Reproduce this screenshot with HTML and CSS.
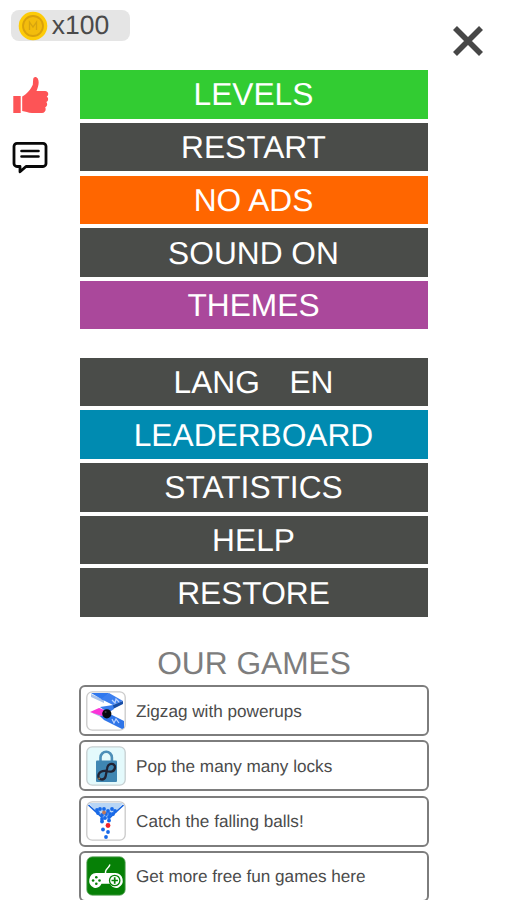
FILE: index.html
```html
<!DOCTYPE html>
<html lang="en">
<head>
<meta charset="utf-8">
<title>Menu</title>
<link rel="stylesheet" href="styles.css">
</head>
<body>
<div class="screen">
  <aside class="side">
    <div class="coins">
      <svg class="coin" viewBox="0 0 30 30" aria-hidden="true"><circle cx="15" cy="15" r="14.3" fill="#fdcb08"/><circle cx="15" cy="15" r="10" fill="#f3bc0c" stroke="#d9a10c" stroke-width="1.8"/><path d="M11.5 19v-8l3.5 5 3.5-5v8" fill="none" stroke="#d7a40f" stroke-width="1.3"/></svg>
      <span>x100</span>
    </div>
    <svg class="like" viewBox="0 0 36 38" aria-hidden="true"><path d="M.3 20h7.4v17H.3zM9.2 20.5C14 18 18 13 19.8 8.800L20.200 3C20.500.4 23.500.2 24.800 2.500C26.500 6 25.500 10.500 23.500 15H32C35.500 15 36.300 19 33.700 20.600C35.800 22 35.500 25 33.300 26C34.800 27.800 34.300 30.400 32.200 31.300C33.500 34 32 37 29 37H19C15 37 12.500 35.300 9.200 35z" fill="#fd5456"/></svg>
    <svg class="chat" viewBox="0 0 36 34" aria-hidden="true"><path d="M5 2.300h26a3 3 0 0 1 3 3v17.200a3 3 0 0 1-3 3H14L8 30.800V25.500H5a3 3 0 0 1-3-3V5.300a3 3 0 0 1 3-3z" fill="#fff" stroke="#080808" stroke-width="2.800" stroke-linejoin="round"/><path d="M9.500 10h17M9.500 15.500h17" stroke="#080808" stroke-width="2.600" stroke-linecap="round"/></svg>
  </aside>
  <main class="menu">
    <nav class="group">
      <button class="item green">LEVELS</button>
      <button class="item">RESTART</button>
      <button class="item orange">NO ADS</button>
      <button class="item">SOUND ON</button>
      <button class="item purple">THEMES</button>
    </nav>
    <nav class="group">
      <button class="item lang"><span>LANG</span><span>EN</span></button>
      <button class="item blue">LEADERBOARD</button>
      <button class="item">STATISTICS</button>
      <button class="item">HELP</button>
      <button class="item">RESTORE</button>
    </nav>
    <h2 class="heading">OUR GAMES</h2>
    <div class="games">
      <a class="game">
        <svg class="thumb" viewBox="0 0 40 40" aria-hidden="true"><clipPath id="c1"><rect x="1" y="1" width="38" height="38" rx="5"/></clipPath><rect x=".8" y=".8" width="38.400" height="38.400" rx="5.500" fill="#fff" stroke="#c9c9c9" stroke-width="1.300"/><g clip-path="url(#c1)"><path d="M5 3l13 6v3L5 6zM13 17l10 4v3l-10-3zM4 21l13 6 20 11v-3L17 24z" fill="#a9c3ea"/><path d="M5 2h18l-6 7z" fill="#2f78ef"/><path d="M23 2l14 8-10 4-12-6z" fill="#3d80f0"/><path d="M37 10v3l-10 5v-4z" fill="#174da6"/><path d="M27 14l-13 2 8 6 6-4z" fill="#387cec"/><path d="M14 25l10-2 14 7v7l-2 1-18-9z" fill="#2f75e8"/><path d="M4 21l9-4 10 4-7 4z" fill="#fb35d8"/><path d="M26 9l3 3 1-4 3 3M26 28l2 4 2-4 3 4" stroke="#b9d2ff" stroke-width="1.200" fill="none"/></g><circle cx="20.800" cy="22.800" r="4.600" fill="#080a10"/><circle cx="19.600" cy="21" r="1" fill="#444"/></svg>
        <span>Zigzag with powerups</span>
      </a>
      <a class="game">
        <svg class="thumb" viewBox="0 0 40 40" aria-hidden="true"><rect x=".8" y=".8" width="38.400" height="38.400" rx="5.500" fill="#e4fafc" stroke="#c6cfd1" stroke-width="1.300"/><path d="M14.500 16v-4.500a5.700 5.700 0 0 1 11.400 0V16" fill="none" stroke="#4c8fb8" stroke-width="2.600"/><rect x="10" y="14.500" width="21" height="21.500" rx="1" fill="#3f86b2"/><path d="M20.400 25C16.500 24.300 12.400 26 12.300 30S18 35 19.600 30.500L21 23C22 16 29.500 17 29 21.500S24.500 26 20.400 25z" fill="none" stroke="#202334" stroke-width="2.300"/><circle cx="13.200" cy="32.500" r="1" fill="#9b7846"/></svg>
        <span>Pop the many many locks</span>
      </a>
      <a class="game">
        <svg class="thumb" viewBox="0 0 40 40" aria-hidden="true"><rect x=".8" y=".8" width="38.400" height="38.400" rx="5.500" fill="#fff" stroke="#c9c9c9" stroke-width="1.300"/><path d="M3 2h34L24 18h-8z" fill="#b7d5f6"/><path d="M2.500 4L16 16.500M37.500 4L24 16.500" stroke="#1763dc" stroke-width="1.700"/><g fill="#1769e8"><circle cx="11" cy="9" r="1.900"/><circle cx="14" cy="8" r="1.900"/><circle cx="18" cy="8" r="1.900"/><circle cx="22" cy="10" r="1.900"/><circle cx="26" cy="8" r="1.900"/><circle cx="29" cy="10" r="1.900"/><circle cx="12" cy="12" r="1.900"/><circle cx="16" cy="14" r="1.900"/><circle cx="20" cy="13" r="1.900"/><circle cx="24" cy="13" r="1.900"/><circle cx="27" cy="13" r="1.900"/><circle cx="16" cy="18" r="1.900"/><circle cx="19" cy="17" r="1.900"/><circle cx="23" cy="16" r="1.900"/><circle cx="16" cy="20.500" r="1.900"/><circle cx="23" cy="19.500" r="1.900"/><circle cx="17" cy="28.500" r="1.900"/><circle cx="22" cy="31" r="1.900"/><circle cx="20" cy="36" r="1.900"/></g><circle cx="18" cy="11.500" r="1.900" fill="#c07757"/><circle cx="22" cy="24.500" r="2.400" fill="#f3212a"/></svg>
        <span>Catch the falling balls!</span>
      </a>
      <a class="game">
        <svg class="thumb" viewBox="0 0 40 40" aria-hidden="true"><rect x=".8" y=".8" width="38.400" height="38.400" rx="5.500" fill="#068006" stroke="#68a968" stroke-width=".8"/><path d="M19.500 18C18.500 12 22.500 13.500 24 8.500" fill="none" stroke="#fff" stroke-width="1.300"/><path d="M10 17h19.500a7.600 7.600 0 0 1 3 14.400C29 33 25.500 31 24 27.800h-8.500C14 31 11 33 7.500 31.400A7.600 7.600 0 0 1 10 17z" fill="#fff"/><circle cx="28.700" cy="24.500" r="5.200" fill="#fff" stroke="#068006" stroke-width="1.300"/><path d="M28.700 21.300v6.400M25.500 24.500h6.400" stroke="#068006" stroke-width="1.700"/><g fill="#068006"><circle cx="10.300" cy="21.300" r="1.300"/><circle cx="10.300" cy="27.700" r="1.300"/><circle cx="7.100" cy="24.500" r="1.300"/><circle cx="13.500" cy="24.500" r="1.300"/></g></svg>
        <span>Get more free fun games here</span>
      </a>
    </div>
  </main>
  <aside class="right">
    <svg class="close" viewBox="0 0 30 30" aria-label="Close"><path d="M2 2l26 26M28 2L2 28" stroke="#474747" stroke-width="5.600"/></svg>
  </aside>
</div>
</body>
</html>
```
FILE: styles.css
```css
* {
  box-sizing: border-box;
}

body {
  margin: 0;
  background: #fff;
  font-family: "Liberation Sans", Arial, sans-serif;
  text-rendering: geometricPrecision;
}

.screen {
  display: grid;
  grid-template-columns: 79px 350px 78px;
  height: 900px;
  overflow: hidden;
}

.side {
  display: flex;
  flex-direction: column;
  align-items: flex-start;
  padding: 10px 0 0 11px;
}

.coins {
  display: flex;
  flex: none;
  align-items: center;
  gap: 3.7px;
  width: 119px;
  height: 31px;
  padding-left: 7px;
  border-radius: 8px;
  background: #e5e5e5;
  color: #4a4a4a;
  font-size: 26.5px;
  line-height: 31px;
}

.coin {
  width: 30px;
  height: 30px;
}

.like {
  width: 36px;
  height: 38px;
  margin: 34.5px 0 0 2px;
}

.chat {
  width: 36px;
  height: 34px;
  margin: 27px 0 0 1px;
}

.menu {
  padding-top: 70.3px;
}

.group {
  display: flex;
  flex-direction: column;
  gap: 4.3px;
  margin: 0 1px 28.3px;
}

.item {
  display: flex;
  align-items: center;
  justify-content: center;
  height: 48.4px;
  padding: 0 1px 0 0;
  border: 0;
  background: #4a4c49;
  color: #fff;
  font: 31.7px/48px "Liberation Sans", Arial, sans-serif;
  text-rendering: geometricPrecision;
}

.green { background: #32cc32; }
.orange { background: #ff6600; }
.purple { background: #aa489b; }
.blue { background: #008bb1; }

.lang {
  gap: 29.5px;
}

.heading {
  height: 40px;
  margin: 0;
  color: #7d7d7d;
  font-size: 31.7px;
  font-weight: 400;
  line-height: 36px;
  text-align: center;
}

.games {
  display: flex;
  flex-direction: column;
  gap: 4.2px;
}

.game {
  display: flex;
  flex: none;
  align-items: center;
  gap: 10px;
  height: 51px;
  padding-left: 5px;
  border: 2px solid #7d7d7d;
  border-radius: 6px;
  color: #4b4b4b;
  font-size: 17.15px;
  line-height: 22px;
}

.thumb {
  flex: none;
  width: 40px;
  height: 40px;
}

.right {
  padding: 26px 0 0 24px;
}

.close {
  display: block;
  width: 30px;
  height: 30px;
}
```
